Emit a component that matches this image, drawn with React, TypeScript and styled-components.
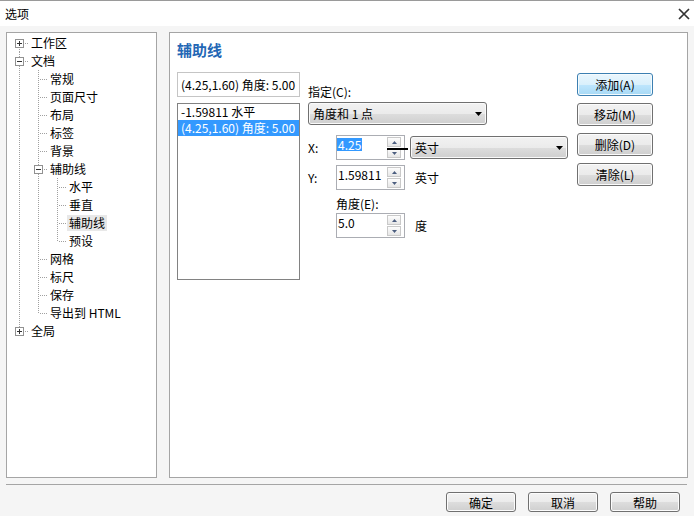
import React from 'react';
import styled, { createGlobalStyle, css } from 'styled-components';

const GlobalStyle = createGlobalStyle`
  html, body {
    margin: 0;
    padding: 0;
  }
  body {
    font-family: "Noto Sans CJK SC", "Noto Sans", sans-serif;
    font-size: 12px;
    color: #000;
  }
`;

const Window = styled.div`
  width: 694px;
  height: 516px;
  display: flex;
  flex-direction: column;
  background: #f5f5f5;
  overflow: hidden;
`;

const TitleBar = styled.div`
  height: 25px;
  border-top: 1px solid #9a9a9a;
  background: #fff;
  display: flex;
  align-items: center;
  justify-content: space-between;
  padding: 0 4px 0 5px;
`;

const Title = styled.span`
  font-size: 12px;
  line-height: 14px;
`;

const Main = styled.div`
  height: 458px;
  box-sizing: border-box;
  display: flex;
  gap: 12px;
  padding: 6px;
`;

const TreePanel = styled.div`
  width: 151px;
  box-sizing: border-box;
  border: 1px solid #a5a5a5;
  background: #fff;
  padding: 1px 0 0 3px;
`;

const TreeRow = styled.div`
  display: flex;
  height: 18px;
  align-items: center;
`;

const Guide = styled.span<{ $line: boolean }>`
  width: 19px;
  height: 18px;
  flex: none;
  box-sizing: border-box;
  ${(p) =>
    p.$line &&
    css`
      background-image: linear-gradient(#a0a0a0 50%, transparent 50%);
      background-size: 1px 2px;
      background-repeat: repeat-y;
      background-position: 9px 0;
    `}
`;

type ConnectorKind = 'first' | 'tee' | 'end';

const Connector = styled.span<{ $kind: ConnectorKind }>`
  width: 19px;
  height: 18px;
  flex: none;
  position: relative;

  &::before {
    content: '';
    position: absolute;
    left: 9px;
    width: 1px;
    top: ${(p) => (p.$kind === 'first' ? '9px' : '0')};
    height: ${(p) => (p.$kind === 'tee' ? '18px' : '9px')};
    background-image: linear-gradient(#a0a0a0 50%, transparent 50%);
    background-size: 1px 2px;
  }

  &::after {
    content: '';
    position: absolute;
    left: 10px;
    top: 9px;
    width: 9px;
    height: 1px;
    background-image: linear-gradient(90deg, transparent 50%, #a0a0a0 50%);
    background-size: 2px 1px;
  }
`;

const Expander = styled.span<{ $open: boolean }>`
  position: absolute;
  left: 5px;
  top: 5px;
  width: 9px;
  height: 9px;
  box-sizing: border-box;
  border: 1px solid #919191;
  background: #fff;
  z-index: 1;

  &::before {
    content: '';
    position: absolute;
    left: 1px;
    top: 3px;
    width: 5px;
    height: 1px;
    background: #333;
  }

  &::after {
    content: '';
    position: absolute;
    left: 3px;
    top: 1px;
    width: 1px;
    height: 5px;
    background: #333;
    display: ${(p) => (p.$open ? 'none' : 'block')};
  }
`;

const NodeLabel = styled.span<{ $selected?: boolean }>`
  padding: 0 2px;
  line-height: 16px;
  white-space: nowrap;
  background: ${(p) => (p.$selected ? '#e8e8e8' : 'transparent')};
`;

const ContentPanel = styled.div`
  flex: 1;
  box-sizing: border-box;
  border: 1px solid #a5a5a5;
  background: #fff;
  padding: 7px 7px;
`;

const Heading = styled.h2`
  margin: 0;
  font-size: 15px;
  line-height: 20px;
  font-weight: 700;
  color: #2367b5;
`;

const ContentRow = styled.div`
  display: flex;
  align-items: flex-start;
  margin-top: 12px;
`;

const LeftCol = styled.div`
  width: 123px;
  display: flex;
  flex-direction: column;
  gap: 6px;
`;

const EntryBox = styled.div`
  height: 25px;
  box-sizing: border-box;
  border: 1px solid #c5c5c5;
  padding: 0 3px;
  line-height: 23px;
  white-space: nowrap;
`;

const ListBox = styled.div`
  height: 177px;
  box-sizing: border-box;
  border: 1px solid #828282;
`;

const ListItem = styled.div<{ $selected?: boolean }>`
  height: 16px;
  line-height: 16px;
  padding-left: 3px;
  white-space: nowrap;
  background: ${(p) => (p.$selected ? '#3399ff' : 'transparent')};
  color: ${(p) => (p.$selected ? '#fff' : '#000')};
`;

const MiddleCol = styled.div`
  width: 260px;
  margin-left: 8px;
  display: flex;
  flex-direction: column;
`;

const FieldLabel = styled.div<{ $top?: number; $indent?: number }>`
  line-height: 16px;
  margin-top: ${(p) => p.$top ?? 0}px;
  padding-left: ${(p) => p.$indent ?? 0}px;
`;

const Select = styled.div<{ $width: number }>`
  height: 23px;
  width: ${(p) => p.$width}px;
  flex: none;
  box-sizing: border-box;
  border: 1px solid #707070;
  border-radius: 3px;
  background: linear-gradient(#f2f2f2 0%, #ebebeb 50%, #dddddd 51%, #cfcfcf 100%);
  box-shadow: inset 0 0 0 1px #fafafa;
  display: flex;
  align-items: center;
  justify-content: space-between;
  padding: 0 4px 0 4px;
  margin-top: 2px;
`;

const FieldRow = styled.div<{ $top: number; $indent?: number }>`
  display: flex;
  align-items: center;
  margin-top: ${(p) => p.$top}px;
  padding-left: ${(p) => p.$indent ?? 0}px;
`;

const AxisLabel = styled.span`
  width: 28px;
  flex: none;
`;

const SpinBox = styled.div<{ $marker?: boolean }>`
  width: 69px;
  height: 25px;
  flex: none;
  box-sizing: border-box;
  border: 1px solid #abadb3;
  background: #fff;
  display: flex;
  position: relative;

  ${(p) =>
    p.$marker &&
    css`
      &::after {
        content: '';
        position: absolute;
        left: 50px;
        top: 12px;
        width: 21px;
        height: 2px;
        background: #000;
      }
    `}
`;

const SpinValue = styled.span<{ $selected?: boolean }>`
  align-self: flex-start;
  margin-top: 2px;
  line-height: 13px;
  height: 13px;
  padding: 0 1px;
  ${(p) =>
    p.$selected &&
    css`
      background: #3399ff;
      color: #fff;
    `}
`;

const SpinButtons = styled.div`
  display: flex;
  flex-direction: column;
  gap: 1px;
  margin: 1px 3px 1px auto;
  width: 14px;
`;

const SpinButton = styled.span`
  flex: 1;
  box-sizing: border-box;
  border: 1px solid #c9c9c9;
  background: linear-gradient(#fdfdfd, #e6e6e6);
  display: flex;
  align-items: center;
  justify-content: center;
`;

const UnitSelect = styled(Select)`
  margin: 0 0 0 5px;
`;

const UnitText = styled.span`
  margin-left: 10px;
`;

const RightCol = styled.div`
  margin-left: 9px;
  margin-top: 1px;
  display: flex;
  flex-direction: column;
  gap: 7px;
`;

const Button = styled.button<{ $default?: boolean; $w?: number; $h?: number }>`
  width: ${(p) => p.$w ?? 76}px;
  height: ${(p) => p.$h ?? 23}px;
  padding: 0;
  font-family: inherit;
  font-size: 12px;
  color: #000;
  border-radius: 3px;
  border: 1px solid #707070;
  background: linear-gradient(#f2f2f2 0%, #ebebeb 50%, #dddddd 51%, #cfcfcf 100%);
  box-shadow: inset 0 0 0 1px #fcfcfc;
  ${(p) =>
    p.$default &&
    css`
      border-color: #3c7fb1;
      background: linear-gradient(#eaf6fd 0%, #d9f0fc 50%, #bee6fd 51%, #a7d9f5 100%);
      box-shadow: inset 0 0 0 1px #f4fbfe;
    `}
`;

const Separator = styled.div`
  margin: 0 7px 0 6px;
  border-top: 1px solid #a5a5a5;
`;

const Footer = styled.div`
  display: flex;
  justify-content: flex-end;
  gap: 12px;
  padding: 7px 14px 0 0;
`;

const DownArrow = () => (
  <svg width="7" height="4" viewBox="0 0 7 4">
    <polygon points="0,0 7,0 3.5,4" fill="#000" />
  </svg>
);

const TinyArrow = ({ up }: { up?: boolean }) => (
  <svg width="5" height="3" viewBox="0 0 5 3">
    <polygon points={up ? '0,3 5,3 2.5,0' : '0,0 5,0 2.5,3'} fill="#4b5d7f" />
  </svg>
);

const CloseIcon = () => (
  <svg width="12" height="12" viewBox="0 0 12 12">
    <path d="M1 1 L11 11 M11 1 L1 11" stroke="#333" strokeWidth="1.7" />
  </svg>
);

const Spinner = () => (
  <SpinButtons>
    <SpinButton>
      <TinyArrow up />
    </SpinButton>
    <SpinButton>
      <TinyArrow />
    </SpinButton>
  </SpinButtons>
);

type TreeNode = {
  label: string;
  children?: TreeNode[];
  expandable?: boolean;
  open?: boolean;
  selected?: boolean;
};

const tree: TreeNode[] = [
  { label: '工作区', expandable: true },
  {
    label: '文档',
    expandable: true,
    open: true,
    children: [
      { label: '常规' },
      { label: '页面尺寸' },
      { label: '布局' },
      { label: '标签' },
      { label: '背景' },
      {
        label: '辅助线',
        expandable: true,
        open: true,
        children: [
          { label: '水平' },
          { label: '垂直' },
          { label: '辅助线', selected: true },
          { label: '预设' },
        ],
      },
      { label: '网格' },
      { label: '标尺' },
      { label: '保存' },
      { label: '导出到 HTML' },
    ],
  },
  { label: '全局', expandable: true },
];

const renderTree = (nodes: TreeNode[], guides: boolean[], root: boolean): React.ReactNode[] =>
  nodes.flatMap((node, i) => {
    const last = i === nodes.length - 1;
    const kind: ConnectorKind = root && i === 0 ? 'first' : last ? 'end' : 'tee';
    const key = `${guides.length}-${i}-${node.label}`;
    const row = (
      <TreeRow key={key}>
        {guides.map((g, j) => (
          <Guide key={j} $line={g} />
        ))}
        <Connector $kind={kind}>{node.expandable && <Expander $open={!!node.open} />}</Connector>
        <NodeLabel $selected={node.selected}>{node.label}</NodeLabel>
      </TreeRow>
    );
    if (node.open && node.children) {
      return [row, ...renderTree(node.children, [...guides, !last], false)];
    }
    return [row];
  });

const App: React.FC = () => (
  <>
    <GlobalStyle />
    <Window>
      <TitleBar>
        <Title>选项</Title>
        <CloseIcon />
      </TitleBar>
      <Main>
        <TreePanel>{renderTree(tree, [], true)}</TreePanel>
        <ContentPanel>
          <Heading>辅助线</Heading>
          <ContentRow>
            <LeftCol>
              <EntryBox>(4.25,1.60) 角度: 5.00</EntryBox>
              <ListBox>
                <ListItem>-1.59811 水平</ListItem>
                <ListItem $selected>(4.25,1.60) 角度: 5.00</ListItem>
              </ListBox>
            </LeftCol>
            <MiddleCol>
              <FieldLabel $top={12}>指定(C):</FieldLabel>
              <Select $width={179}>
                <span>角度和 1 点</span>
                <DownArrow />
              </Select>
              <FieldRow $top={10}>
                <AxisLabel>X:</AxisLabel>
                <SpinBox $marker>
                  <SpinValue $selected>4.25</SpinValue>
                  <Spinner />
                </SpinBox>
                <UnitSelect $width={158}>
                  <span>英寸</span>
                  <DownArrow />
                </UnitSelect>
              </FieldRow>
              <FieldRow $top={5}>
                <AxisLabel>Y:</AxisLabel>
                <SpinBox>
                  <SpinValue>1.59811</SpinValue>
                  <Spinner />
                </SpinBox>
                <UnitText>英寸</UnitText>
              </FieldRow>
              <FieldLabel $top={6} $indent={28}>
                角度(E):
              </FieldLabel>
              <FieldRow $top={1} $indent={28}>
                <SpinBox>
                  <SpinValue>5.0</SpinValue>
                  <Spinner />
                </SpinBox>
                <UnitText>度</UnitText>
              </FieldRow>
            </MiddleCol>
            <RightCol>
              <Button $default>添加(A)</Button>
              <Button>移动(M)</Button>
              <Button>删除(D)</Button>
              <Button>清除(L)</Button>
            </RightCol>
          </ContentRow>
        </ContentPanel>
      </Main>
      <Separator />
      <Footer>
        <Button $w={70} $h={20}>确定</Button>
        <Button $w={70} $h={20}>取消</Button>
        <Button $w={70} $h={20}>帮助</Button>
      </Footer>
    </Window>
  </>
);

export default App;
